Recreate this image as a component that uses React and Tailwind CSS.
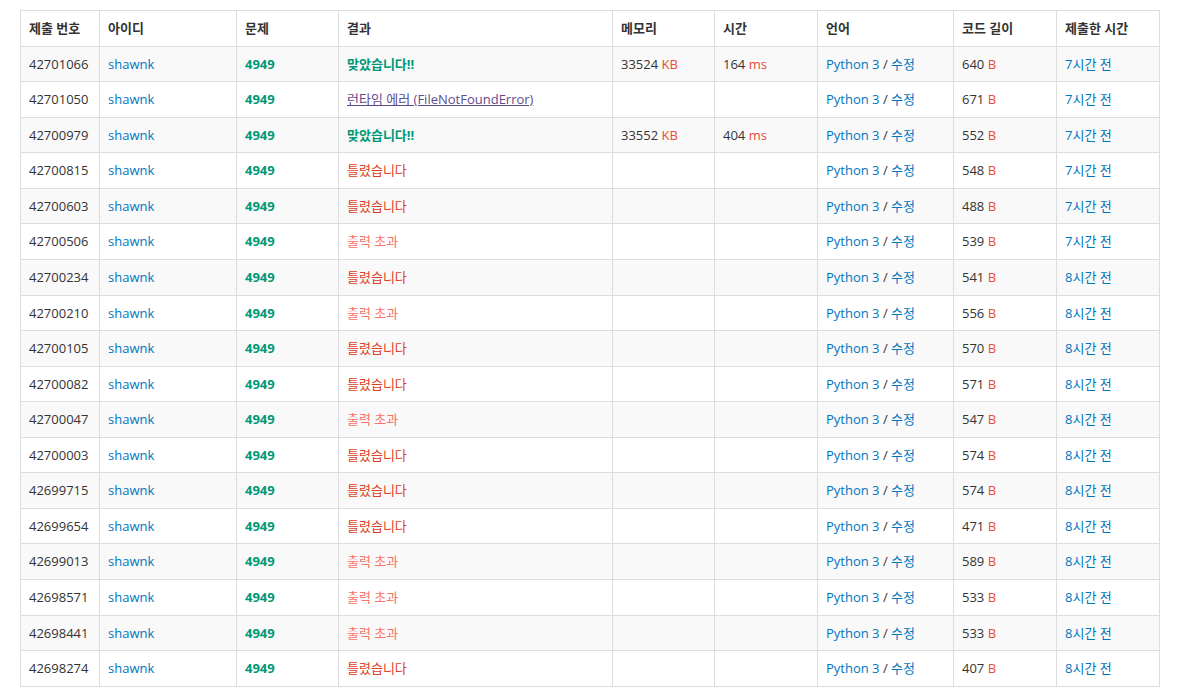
const rows = [
  ['42701066', 'ac', '33524', '164', '640', '7'],
  ['42701050', 'rte', '', '', '671', '7'],
  ['42700979', 'ac', '33552', '404', '552', '7'],
  ['42700815', 'wa', '', '', '548', '7'],
  ['42700603', 'wa', '', '', '488', '7'],
  ['42700506', 'ole', '', '', '539', '7'],
  ['42700234', 'wa', '', '', '541', '8'],
  ['42700210', 'ole', '', '', '556', '8'],
  ['42700105', 'wa', '', '', '570', '8'],
  ['42700082', 'wa', '', '', '571', '8'],
  ['42700047', 'ole', '', '', '547', '8'],
  ['42700003', 'wa', '', '', '574', '8'],
  ['42699715', 'wa', '', '', '574', '8'],
  ['42699654', 'wa', '', '', '471', '8'],
  ['42699013', 'ole', '', '', '589', '8'],
  ['42698571', 'ole', '', '', '533', '8'],
  ['42698441', 'ole', '', '', '533', '8'],
  ['42698274', 'wa', '', '', '407', '8'],
];

function Result({ type }) {
  if (type === 'ac') return <span className="font-bold text-[#009874]">맞았습니다!!</span>;
  if (type === 'wa') return <span className="text-[#dd4124]">틀렸습니다</span>;
  if (type === 'ole') return <span className="text-[#fa7268]">출력 초과</span>;
  return <span className="text-[#5f4b8b] underline">런타임 에러 (FileNotFoundError)</span>;
}

const cell = 'border border-[#ddd] px-2 py-2 align-top';
const headers = ['제출 번호', '아이디', '문제', '결과', '메모리', '시간', '언어', '코드 길이', '제출한 시간'];
const widths = ['w-[79px]', 'w-[137px]', 'w-[102px]', 'w-[274px]', 'w-[102px]', 'w-[103px]', 'w-[136px]', 'w-[103px]', 'w-[103px]'];

export default function App() {
  return (
    <div className="bg-white px-5 pt-[10px] text-[13px] leading-[1.42857] text-[#333]" style={{ fontFamily: '"Open Sans", "Noto Sans CJK KR", sans-serif' }}>
      <table className="w-[1139px] table-fixed border-collapse">
        <colgroup>
          {widths.map((w, i) => <col key={i} className={w} />)}
        </colgroup>
        <thead>
          <tr>
            {headers.map((h) => (
              <th key={h} className={cell + ' text-left font-bold'}>{h}</th>
            ))}
          </tr>
        </thead>
        <tbody>
          {rows.map((r, i) => (
            <tr key={r[0]} className={i % 2 === 0 ? 'bg-[#f9f9f9]' : 'bg-white'}>
              <td className={cell}>{r[0]}</td>
              <td className={cell}><span className="text-[#0076c0]">shawnk</span></td>
              <td className={cell}><span className="font-bold text-[#009874]">4949</span></td>
              <td className={cell}><Result type={r[1]} /></td>
              <td className={cell}>{r[2] && <>{r[2]} <span className="text-[#e74c3c]">KB</span></>}</td>
              <td className={cell}>{r[3] && <>{r[3]} <span className="text-[#e74c3c]">ms</span></>}</td>
              <td className={cell}><span className="text-[#0076c0]">Python 3</span> / <span className="text-[#0076c0]">수정</span></td>
              <td className={cell}>{r[4]} <span className="text-[#e74c3c]">B</span></td>
              <td className={cell}><span className="text-[#0076c0]">{r[5]}시간 전</span></td>
            </tr>
          ))}
        </tbody>
      </table>
    </div>
  );
}
